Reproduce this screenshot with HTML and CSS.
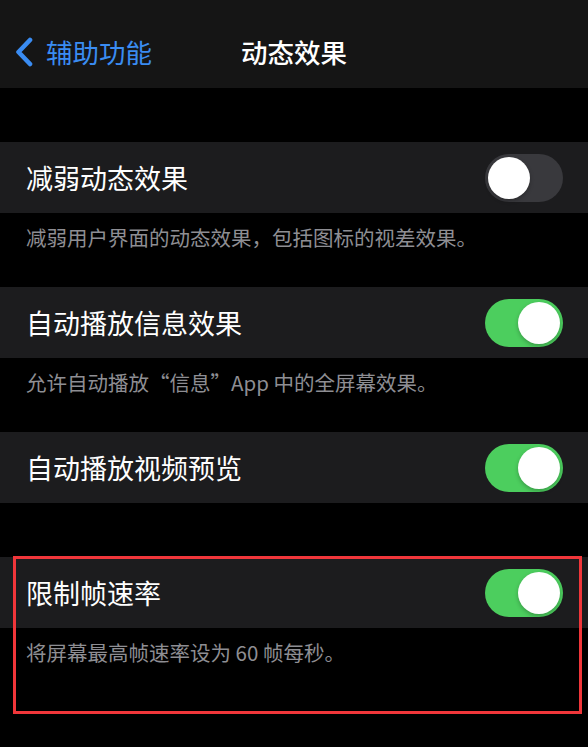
FILE: index.html
```html
<!DOCTYPE html>
<html lang="zh-CN">

<head>
    <meta charset="UTF-8">
    <meta name="viewport" content="width=device-width, initial-scale=1.0">
    <title>动态效果</title>
    <link rel="stylesheet" href="styles.css">
</head>

<body>
    <!-- 导航栏 -->
    <div class="nav">
        <div class="nav-back">
            <svg class="chevron" width="20" height="30" viewBox="0 0 20 30">
                <path d="M16 3 L4.5 15 L16 27" fill="none" stroke="currentColor" stroke-width="4.6" stroke-linecap="round" stroke-linejoin="round" />
            </svg>
            <span>辅助功能</span>
        </div>
        <div class="nav-title">动态效果</div>
        <div></div>
    </div>

    <div class="spacer"></div>

    <div class="row">
        <span class="label">减弱动态效果</span>
        <div class="switch"><div class="knob"></div></div>
    </div>
    <div class="footer">减弱用户界面的动态效果，包括图标的视差效果。</div>

    <div class="row">
        <span class="label">自动播放信息效果</span>
        <div class="switch on"><div class="knob"></div></div>
    </div>
    <div class="footer">允许自动播放“信息”App 中的全屏幕效果。</div>

    <div class="row">
        <span class="label">自动播放视频预览</span>
        <div class="switch on"><div class="knob"></div></div>
    </div>
    <div class="spacer"></div>

    <!-- 标注的分组 -->
    <div class="group marked">
        <div class="row">
            <span class="label">限制帧速率</span>
            <div class="switch on"><div class="knob"></div></div>
        </div>
        <div class="footer">将屏幕最高帧速率设为 60 帧每秒。</div>
    </div>
</body>

</html>
```

FILE: styles.css
```css
body {
    margin: 0;
    padding: 0;
    height: 747px;
    overflow: hidden;
    background: #000;
    color: #fff;
    font-family: "Noto Sans CJK SC", "Noto Sans", sans-serif;
}

/* 导航栏 */
.nav {
    height: 88px;
    box-sizing: border-box;
    padding: 0 0 17px 14px;
    background: #151515;
    display: grid;
    grid-template-columns: 1fr auto 1fr;
    align-items: end;
}

.nav-back {
    display: flex;
    align-items: center;
    gap: 12px;
    color: #3a8cf2;
    font-size: 26.5px;
    line-height: 38px;
}

.chevron {
    display: block;
}

.nav-title {
    font-size: 26.5px;
    line-height: 38px;
    font-weight: 500;
    margin-right: 14px;
}

.spacer {
    height: 54px;
}

/* 设置行 */
.row {
    height: 71px;
    box-sizing: border-box;
    padding: 0 25px 0 26px;
    background: #1c1c1e;
    display: flex;
    justify-content: space-between;
    align-items: center;
}

.label {
    font-size: 27px;
    line-height: 36px;
}

.footer {
    height: 74px;
    box-sizing: border-box;
    padding: 10px 26px 0;
    font-size: 20.5px;
    line-height: 28px;
    color: #8e8e93;
}

/* 开关 */
.switch {
    width: 78px;
    height: 48px;
    border-radius: 24px;
    background: #39393d;
    box-sizing: border-box;
    padding: 3px;
    display: flex;
}

.switch.on {
    background: #4cce5e;
    justify-content: flex-end;
}

.knob {
    width: 42px;
    height: 42px;
    border-radius: 50%;
    background: #fff;
    box-shadow: 0 2px 4px rgba(0, 0, 0, 0.25);
}

/* 红色标注框 */
.group {
    position: relative;
}

.marked::after {
    content: "";
    position: absolute;
    left: 13px;
    top: -1px;
    width: 569px;
    height: 158px;
    box-sizing: border-box;
    border: 3px solid #f0363a;
}
```
